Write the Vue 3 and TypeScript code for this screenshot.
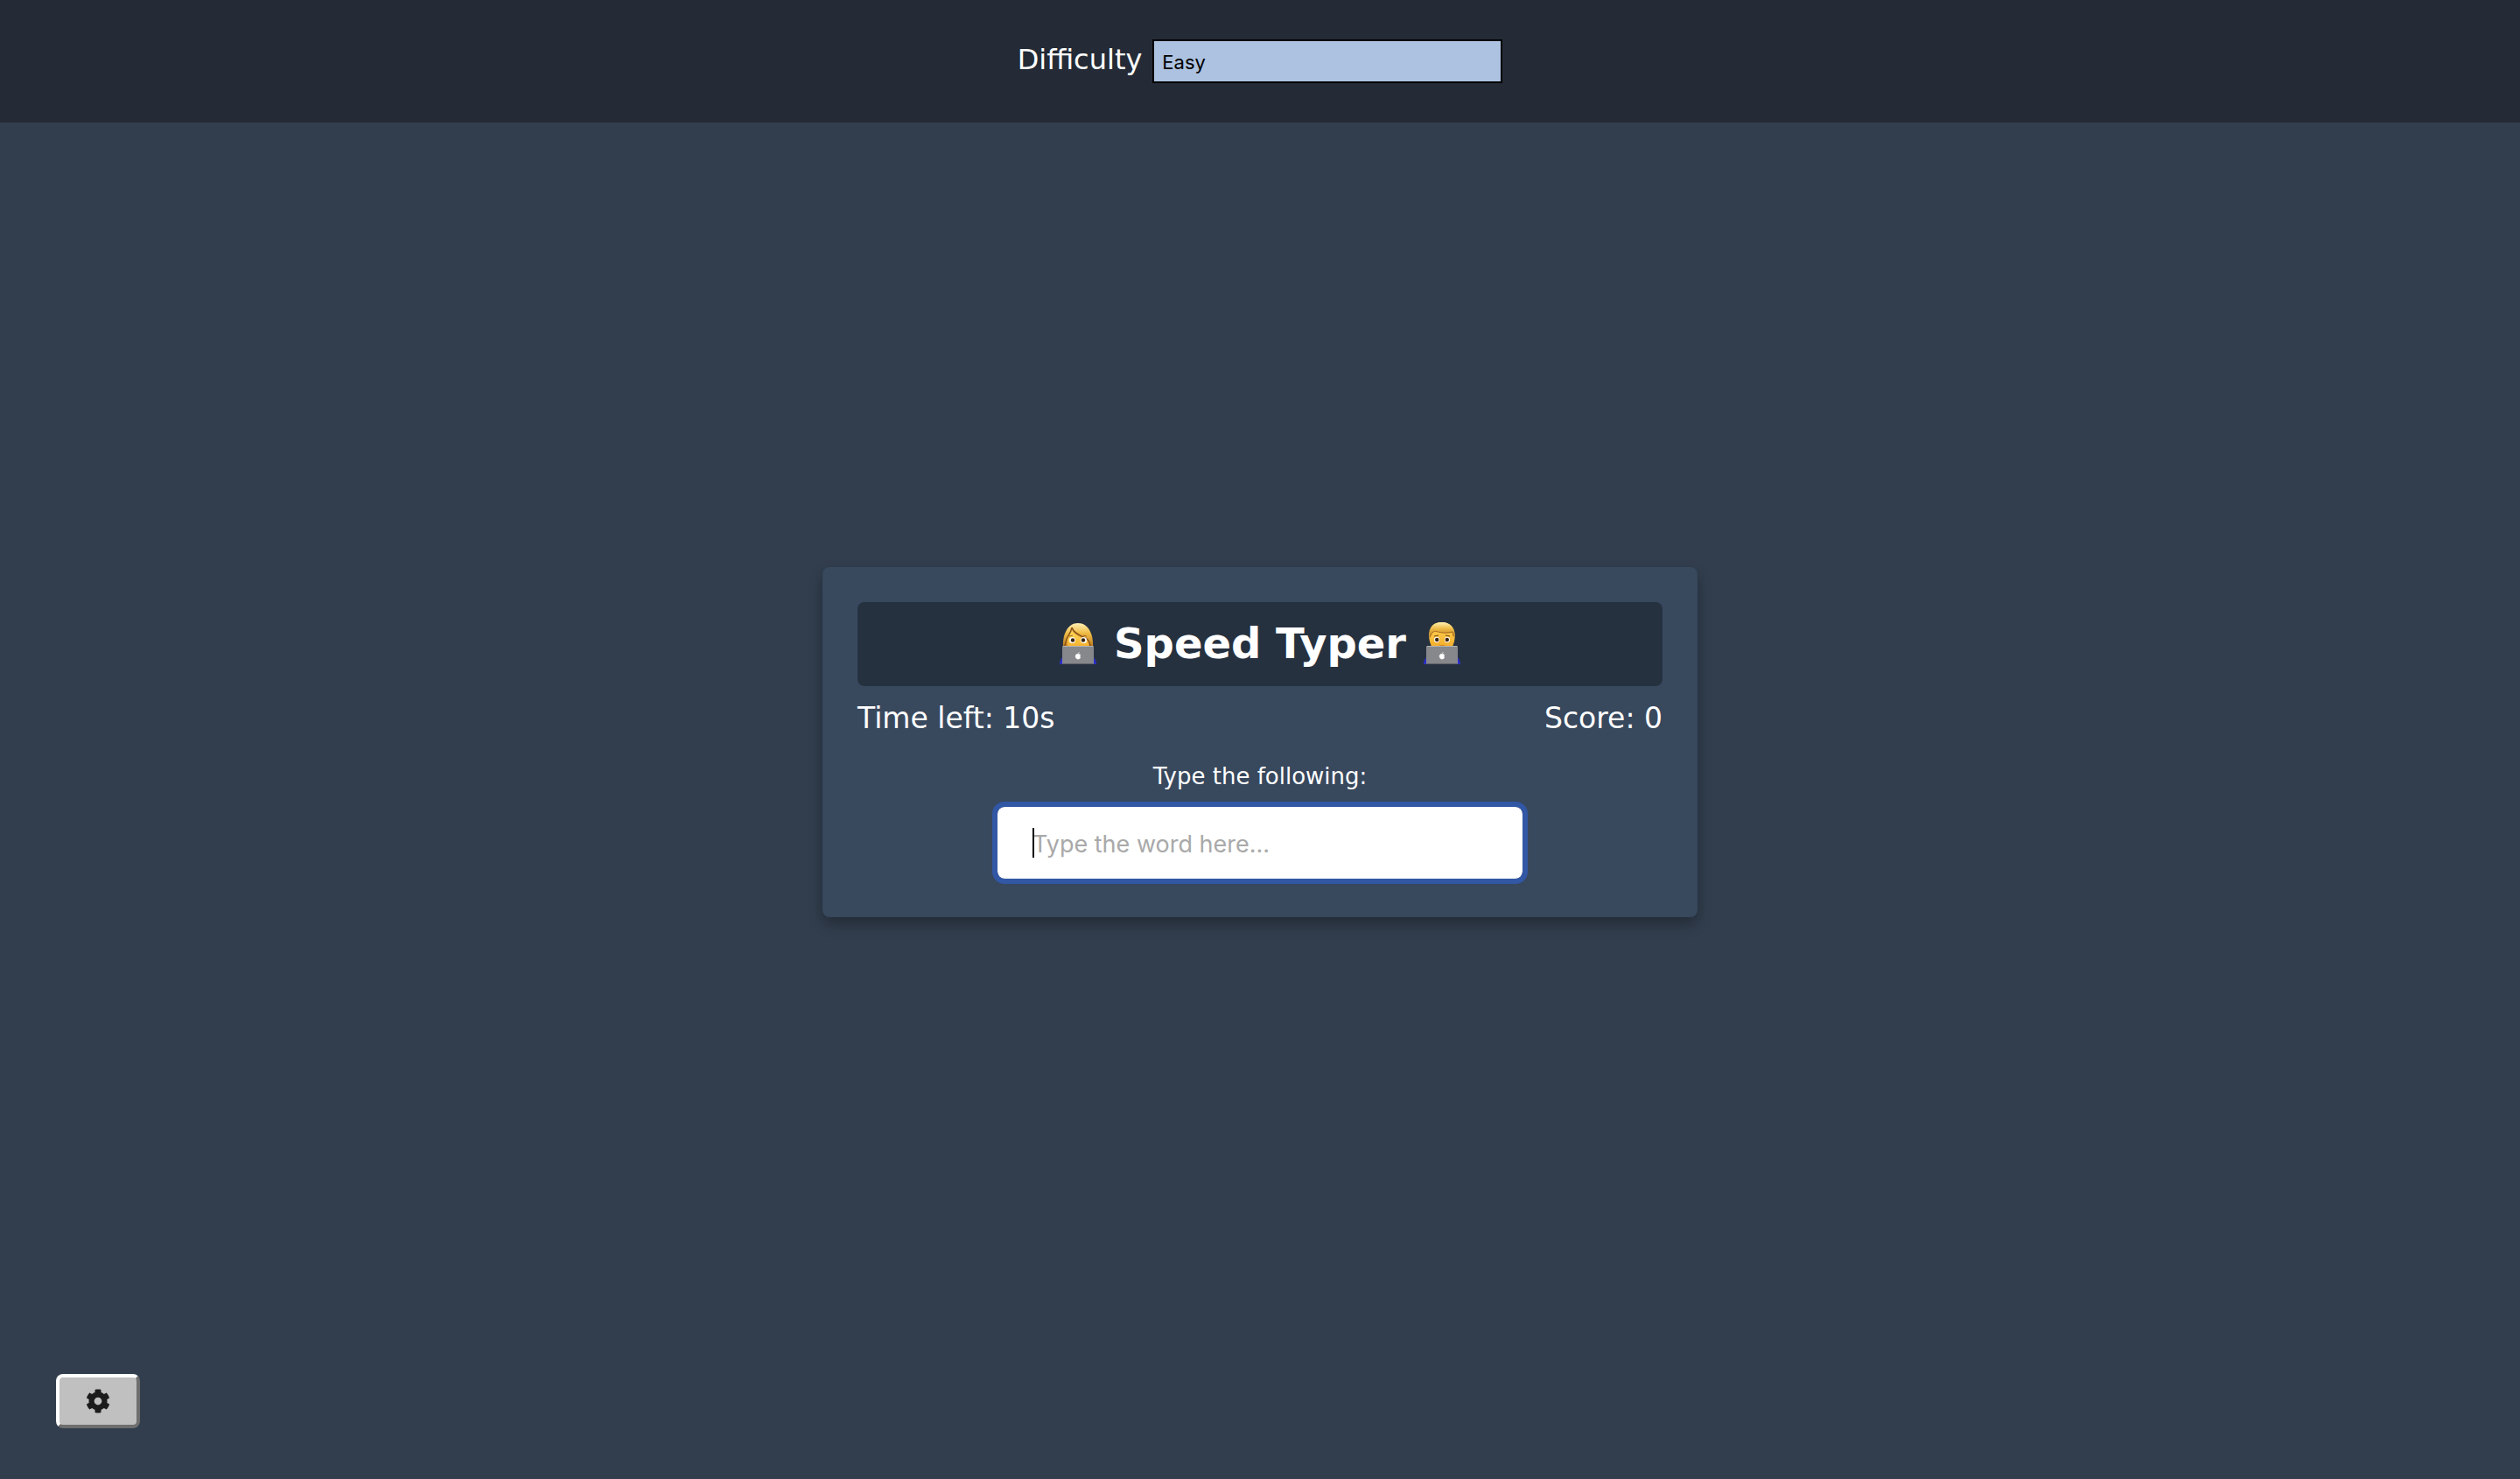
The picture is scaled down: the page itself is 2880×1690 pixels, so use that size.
<script setup lang="ts">
import { onMounted, ref } from 'vue'

type Difficulty = 'easy' | 'medium' | 'hard'

const difficulty = ref<Difficulty>('easy')
const settingsOpen = ref(true)
const time = ref(10)
const score = ref(0)
const typed = ref('')
const field = ref<HTMLInputElement | null>(null)

onMounted(() => field.value?.focus())
</script>

<template>
  <div class="page">
    <header v-show="settingsOpen" class="settings">
      <form class="settings-form" @submit.prevent>
        <label for="difficulty">Difficulty</label>
        <select id="difficulty" v-model="difficulty">
          <option value="easy">Easy</option>
          <option value="medium">Medium</option>
          <option value="hard">Hard</option>
        </select>
      </form>
    </header>

    <main class="stage">
      <section class="card">
        <h2 class="title">
          <svg class="person" viewBox="0 0 42 48" aria-hidden="true">
            <defs>
              <linearGradient id="hair-w" x1="0" y1="0" x2="0" y2="1">
                <stop offset="0" stop-color="#fff0b4" />
                <stop offset=".4" stop-color="#efbd48" />
                <stop offset="1" stop-color="#b97820" />
              </linearGradient>
              <linearGradient id="face" x1="0" y1="0" x2="0" y2="1">
                <stop offset="0" stop-color="#ffd95a" />
                <stop offset="1" stop-color="#f3ad2c" />
              </linearGradient>
            </defs>
            <path d="M0 48c0-4 2-8 5-9h32c3 1 5 5 5 9z" fill="#2b2fc4" />
            <path d="M4 29C3 14 9 1 21 1s18 13 17 28z" fill="url(#hair-w)" />
            <path d="M9 28c-1-8 1-14 5-17 5 5 12 7 18 9 2 2 2 5 1 9z" fill="url(#face)" />
            <path d="M14 6c-1 6-4 9-6 13-1 3-1 7-3 9M14 6c2 7 11 10 17 13 3 2 3 6 5 9" fill="none" stroke="#8d5316" stroke-width="1.5" />
            <ellipse cx="14.500" cy="20.500" rx="3.500" ry="3.500" fill="#fff" />
            <ellipse cx="27.500" cy="20.500" rx="3.500" ry="3.500" fill="#fff" />
            <circle cx="15" cy="20.500" r="2.200" fill="#3a220b" />
            <circle cx="27" cy="20.500" r="2.200" fill="#3a220b" />
            <path d="M11 16l4-1M27 15l4 1" stroke="#a0661a" />
            <rect x="3" y="27" width="36" height="21" rx="1" fill="#87888b" />
            <path d="M4 27.500h34" stroke="#b2b3b6" />
            <path d="M4 47.500h34" stroke="#626367" />
            <path d="M21 36.500c-3-1-4 4-1 5.500h2c2-1 2-2 1-3 0-1 1-1 .5-2-1-1-2-.5-2.500-.5zM21 36l1.500-2" fill="#fff" stroke="#fff" stroke-width=".6" />
          </svg>
          <span>Speed Typer</span>
          <svg class="person" viewBox="0 0 42 48" aria-hidden="true">
            <path d="M0 48c0-4 2-8 5-9h32c3 1 5 5 5 9z" fill="#2b2fc4" />
            <path d="M7 22C4 9 9 0 20 0s18 7 15 22l-2 6H9z" fill="url(#face)" />
            <path d="M7 18C5 7 11 0 21 0s16 8 14 18l-2-6c-8 1-15 0-20-3-3 2-4 5-6 9z" fill="url(#hair-w)" />
            <path d="M7 17c1-3 3-6 6-7 6 2 12 3 20 1l1 5" fill="none" stroke="#a76a1c" stroke-width="1" />
            <path d="M12 16l5-1M25 15l5 1" stroke="#7a4612" stroke-width="1.200" />
            <ellipse cx="15" cy="20" rx="3" ry="3.200" fill="#fff" />
            <ellipse cx="27" cy="20" rx="3" ry="3.200" fill="#fff" />
            <circle cx="15.200" cy="20" r="2.200" fill="#3a220b" />
            <circle cx="26.800" cy="20" r="2.200" fill="#3a220b" />
            <path d="M18 26c2 1 4 1 6 0" stroke="#c98018" fill="none" />
            <rect x="3" y="27" width="36" height="21" rx="1" fill="#87888b" />
            <path d="M4 27.500h34" stroke="#b2b3b6" />
            <path d="M4 47.500h34" stroke="#626367" />
            <path d="M21 36.500c-3-1-4 4-1 5.500h2c2-1 2-2 1-3 0-1 1-1 .5-2-1-1-2-.5-2.500-.5zM21 36l1.500-2" fill="#fff" stroke="#fff" stroke-width=".6" />
          </svg>
        </h2>
        <div class="stats">
          <p>Time left: {{ time }}s</p>
          <p>Score: {{ score }}</p>
        </div>
        <label class="prompt" for="word">Type the following:</label>
        <div class="field">
          <input id="word" ref="field" v-model="typed" type="text" autocomplete="off" placeholder="Type the word here..." />
          <span v-if="!typed" class="caret"></span>
        </div>
      </section>
    </main>

    <button class="settings-btn" type="button" aria-label="Settings" @click="settingsOpen = !settingsOpen">
      <svg viewBox="0 0 512 512" aria-hidden="true">
        <path
          fill="#1c1c1c"
          d="M487.400 315.700l-42.600-24.600c4.300-23.200 4.300-47 0-70.200l42.600-24.600c4.900-2.800 7.100-8.600 5.500-14-11.100-35.600-30-67.800-54.700-94.600-3.800-4.100-10-5.100-14.800-2.300L380.800 110c-17.900-15.400-38.500-27.300-60.800-35.100V25.800c0-5.600-3.900-10.500-9.400-11.700-36.700-8.200-74.300-7.800-109.200 0-5.500 1.200-9.400 6.100-9.400 11.700V75c-22.200 7.900-42.800 19.800-60.800 35.100L88.700 85.500c-4.900-2.800-11-1.900-14.800 2.300-24.700 26.700-43.600 58.900-54.700 94.600-1.700 5.400.6 11.200 5.500 14L67.300 221c-4.300 23.200-4.300 47 0 70.200l-42.600 24.600c-4.900 2.800-7.100 8.600-5.500 14 11.100 35.600 30 67.800 54.700 94.600 3.800 4.100 10 5.100 14.800 2.300l42.600-24.600c17.900 15.400 38.500 27.300 60.800 35.100v49.200c0 5.600 3.900 10.500 9.400 11.700 36.700 8.200 74.300 7.800 109.200 0 5.500-1.200 9.400-6.100 9.400-11.700v-49.200c22.200-7.900 42.800-19.800 60.800-35.100l42.600 24.600c4.900 2.800 11 1.900 14.800-2.300 24.700-26.700 43.600-58.900 54.700-94.600 1.500-5.500-.7-11.300-5.600-14.100zM256 336c-44.100 0-80-35.900-80-80s35.900-80 80-80 80 35.900 80 80-35.900 80-80 80z"
        />
      </svg>
    </button>
  </div>
</template>

<style>
body {
  margin: 0;
  background: #323e4e;
}
</style>

<style scoped>
* {
  box-sizing: border-box;
}

.page {
  display: flex;
  flex-direction: column;
  min-height: 100vh;
  background: #323e4e;
  color: #fff;
  font-family: Verdana, "DejaVu Sans", sans-serif;
}

.settings {
  display: flex;
  justify-content: center;
  height: 140px;
  padding-top: 45px;
  background: #242b36;
}

.settings-form {
  display: flex;
  align-items: flex-start;
  gap: 12px;
  font-size: 32px;
  line-height: 46px;
}

select {
  width: 400px;
  height: 50px;
  padding: 2px 9px 0;
  border: 2px solid #000;
  border-radius: 0;
  appearance: none;
  background: #adc2e0;
  color: #000;
  font-family: Inter, sans-serif;
  font-size: 22px;
}

.stage {
  display: flex;
  flex: 1;
  align-items: center;
  justify-content: center;
  padding-bottom: 134px;
}

.card {
  display: flex;
  flex-direction: column;
  align-items: center;
  width: 1000px;
  max-width: 100%;
  padding: 40px 40px 44px;
  border-radius: 8px;
  background: #38485d;
  box-shadow: 0 8px 16px rgba(0, 0, 0, 0.3);
}

.title {
  display: flex;
  align-items: center;
  justify-content: center;
  gap: 20px;
  align-self: stretch;
  height: 96px;
  margin: 0;
  padding-bottom: 2px;
  border-radius: 8px;
  background: #26313f;
  font-size: 48px;
  line-height: 58px;
}

.person {
  width: 42px;
  height: 48px;
}

.stats {
  display: flex;
  justify-content: space-between;
  align-self: stretch;
  margin-top: 17px;
  font-size: 33px;
  line-height: 40px;
}

.stats p {
  margin: 0;
}

.prompt {
  margin: 30px 0 19px;
  font-size: 26px;
  line-height: 32px;
}

.field {
  position: relative;
  width: 600px;
  max-width: 100%;
}

.field input {
  display: block;
  width: 100%;
  height: 82px;
  padding: 2px 40px 0;
  border: 0;
  border-radius: 8px;
  outline: 6px solid #3157a5;
  background: #fff;
  caret-color: transparent;
  color: #000;
  font-family: Inter, sans-serif;
  font-size: 27px;
}

.field input::placeholder {
  color: #a9a9a9;
  opacity: 1;
}

.caret {
  position: absolute;
  top: 24px;
  left: 40px;
  width: 2px;
  height: 34px;
  background: #000;
}

.settings-btn {
  position: fixed;
  bottom: 58px;
  left: 64px;
  display: flex;
  align-items: center;
  justify-content: center;
  width: 96px;
  height: 62px;
  padding: 0;
  border: 4px solid;
  border-color: #fff #6e6e6e #6e6e6e #fff;
  border-radius: 8px;
  background: #c0c0c0;
}

.settings-btn svg {
  width: 28px;
  height: 28px;
}
</style>
